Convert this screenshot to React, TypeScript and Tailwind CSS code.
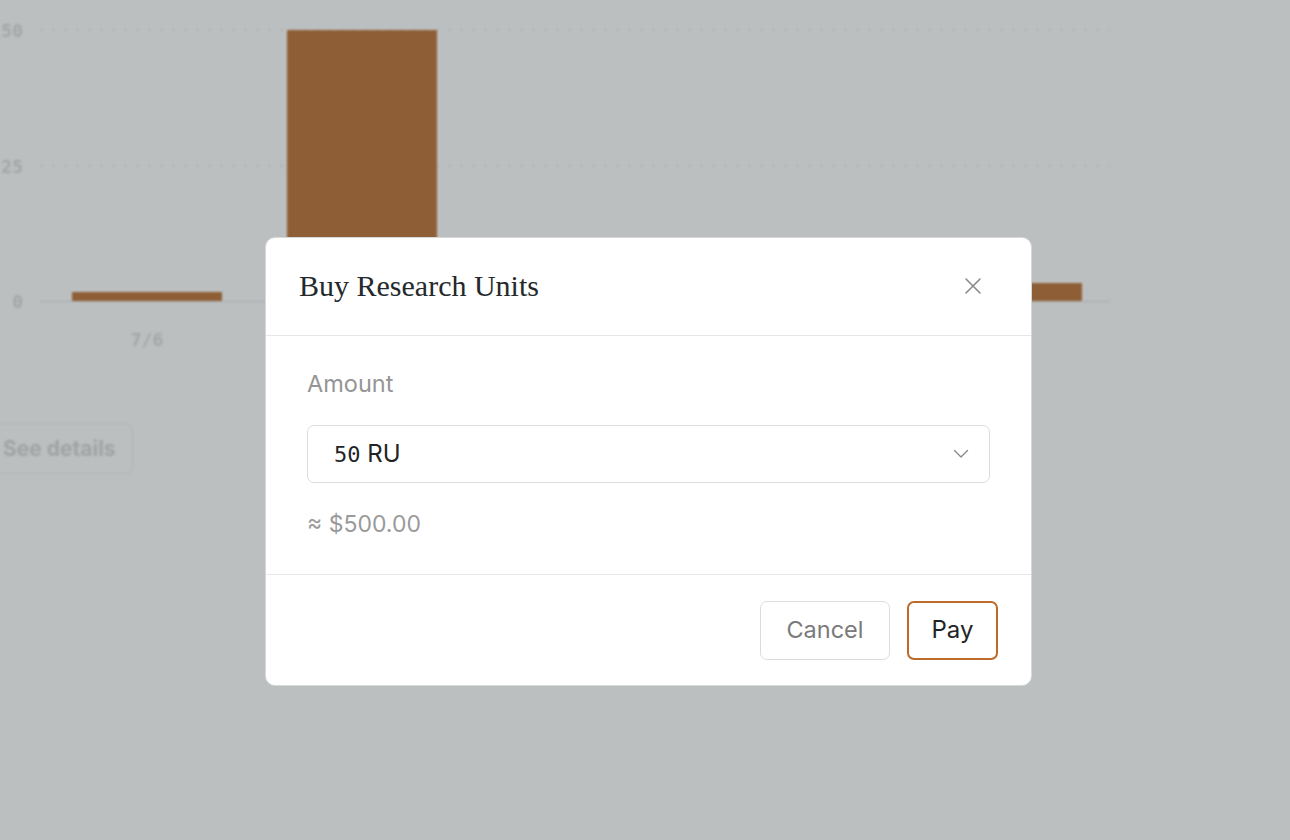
import React from "react";

const SANS = { fontFamily: "Inter, 'Noto Sans', sans-serif" };

function Chart() {
  const bars = [
    { x: 72, h: 9 },
    { x: 287, h: 271 },
    { x: 502, h: 0 },
    { x: 717, h: 0 },
    { x: 932, h: 18 },
  ];
  return (
    <svg width="1130" height="360" viewBox="0 0 1130 360" className="block">
      <line x1="40" y1="30" x2="1110" y2="30" stroke="#adb0b1" strokeWidth="1.5" strokeDasharray="3 9" />
      <line x1="40" y1="166" x2="1110" y2="166" stroke="#adb0b1" strokeWidth="1.5" strokeDasharray="3 9" />
      <line x1="40" y1="301.5" x2="1110" y2="301.5" stroke="#adb0b1" strokeWidth="1.5" />
      {bars.map((b, i) =>
        b.h > 0 ? (
          <rect key={i} x={b.x} y={301 - b.h} width="150" height={b.h} fill="#8e5f36" rx="1" />
        ) : null
      )}
      <g fill="#a3a6a7" fontFamily="'DejaVu Sans Mono', monospace" fontSize="18" fontWeight="bold" textAnchor="end">
        <text x="23" y="37">50</text>
        <text x="23" y="173">25</text>
        <text x="23" y="308">0</text>
      </g>
      <text x="147" y="346" fill="#a3a6a7" fontFamily="'DejaVu Sans Mono', monospace" fontSize="18" fontWeight="bold" textAnchor="middle">7/6</text>
    </svg>
  );
}

export default function App() {
  return (
    <div className="relative w-[1290px] h-[840px] overflow-hidden bg-[#bcbfc0]" style={SANS}>
      <div className="blur-[1.2px]">
        <Chart />
        <div className="mt-[63px] -ml-[14px] w-[147px] h-[51px] rounded-[7px] border border-[#b0b3b4] flex items-center pl-[16px] text-[21px] font-bold text-[#a0a3a4]">
          See details
        </div>
      </div>

      <div className="absolute left-[265px] top-[237px] w-[767px] h-[449px] bg-white rounded-[10px] border border-[#d8d8d8] flex flex-col">
        <div className="h-[98px] shrink-0 border-b border-[#e6e6e6] flex items-center justify-between pl-[33px] pr-[49px]">
          <h2 className="text-[30px] text-[#24292b] leading-none -mt-[1px]" style={{ fontFamily: "'Liberation Serif', serif" }}>
            Buy Research Units
          </h2>
          <svg width="18" height="18" viewBox="0 0 18 18" className="text-[#8a8a8a] -mt-[1px]">
            <path d="M2 2L16 16M16 2L2 16" stroke="currentColor" strokeWidth="1.6" strokeLinecap="round" />
          </svg>
        </div>

        <div className="flex-1 px-[41px] pt-[34px] flex flex-col">
          <label className="text-[23.5px] leading-[28px] text-[#959595]">Amount</label>
          <div className="mt-[27px] h-[58px] rounded-[7px] border border-[#dcdcdc] flex items-center justify-between pl-[26px] pr-[20px]">
            <span className="text-[24px] text-[#1f2426]">
              <span style={{ fontFamily: "'DejaVu Sans Mono', monospace", fontSize: 22 }}>50</span> RU
            </span>
            <svg width="16" height="10" viewBox="0 0 16 10" className="text-[#8a8a8a]">
              <path d="M1.5 1.5L8 8L14.5 1.5" fill="none" stroke="currentColor" strokeWidth="1.4" strokeLinecap="round" strokeLinejoin="round" />
            </svg>
          </div>
          <div className="mt-[27px] text-[23px] leading-[28px] text-[#9a9a9a]">≈ $500.00</div>
        </div>

        <div className="h-[111px] shrink-0 border-t border-[#e6e6e6] flex items-center justify-end gap-[17px] pr-[33px]">
          <button className="w-[130px] h-[59px] rounded-[7px] border border-[#dcdcdc] text-[23.5px] text-[#7a7a7a] bg-white">
            Cancel
          </button>
          <button className="w-[91px] h-[59px] rounded-[7px] border-2 border-[#bd6a2b] text-[24px] text-[#1f2426] bg-white">
            Pay
          </button>
        </div>
      </div>
    </div>
  );
}
